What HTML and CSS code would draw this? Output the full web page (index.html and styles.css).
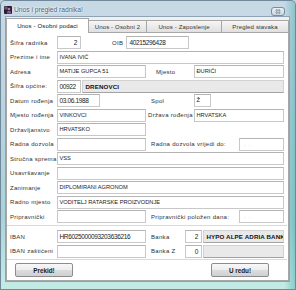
FILE: index.html
```html
<!DOCTYPE html>
<html lang="hr">
<head>
    <meta charset="UTF-8">
    <meta name="viewport" content="width=device-width, initial-scale=1.0">
    <title>Unos i pregled radnika!</title>
    <link rel="stylesheet" href="styles.css">
</head>
<body>
    <div class="window">
        <div class="titlebar">
            <svg class="app-icon" viewBox="0 0 8 8">
                <rect x="0" y="0" width="8" height="8" rx="1" fill="#2b1e31"/>
                <rect x="0.5" y="0.5" width="3" height="3" fill="#6b5a78"/>
                <circle cx="5" cy="3" r="1.3" fill="#b07ab8"/>
                <path d="M2.8 7.5 L3.4 5.2 Q5 4.4 6.6 5.2 L7.2 7.5 Z" fill="#8c5a96"/>
            </svg>
            <span class="title">Unos i pregled radnika!</span>
            <div class="close-btn">
                <svg viewBox="0 0 14 9">
                    <path d="M4.5 2 L9.5 7 M9.5 2 L4.5 7" stroke="#5d6d7c" stroke-width="2.4"/>
                    <path d="M4.5 2 L9.5 7 M9.5 2 L4.5 7" stroke="#ffffff" stroke-width="1.1"/>
                </svg>
            </div>
        </div>

        <div class="client">
            <div class="tabs">
                <div class="tab active tab-1">Unos - Osobni podaci</div>
                <div class="tab tab-2">Unos - Osobni 2</div>
                <div class="tab tab-3">Unos - Zaposlenje</div>
                <div class="tab tab-4">Pregled stavaka</div>
            </div>

            <div class="panel">
                <div class="row">
                    <span class="lbl">Šifra radnika</span>
                    <div class="box w-num num right">2</div>
                    <span class="lbl2 lbl-oib">OIB</span>
                    <div class="box w-oib num">40215296428</div>
                </div>

                <div class="row">
                    <span class="lbl">Prezime i ime</span>
                    <div class="box fill">IVANA IVIĆ</div>
                </div>

                <div class="row">
                    <span class="lbl">Adresa</span>
                    <div class="box w-mid">MATIJE GUPCA 51</div>
                    <span class="lbl2 lbl-mjesto">Mjesto</span>
                    <div class="box fill">ĐURIĆI</div>
                </div>

                <div class="row">
                    <span class="lbl">Šifra općine:</span>
                    <div class="box w-num num">00922</div>
                    <div class="gray-box">DRENOVCI</div>
                </div>

                <div class="row">
                    <span class="lbl">Datum rođenja</span>
                    <div class="box w-date num">03.06.1988</div>
                    <span class="lbl2 lbl-spol">Spol</span>
                    <div class="box w-small">Ž</div>
                </div>

                <div class="row">
                    <span class="lbl">Mjesto rođenja</span>
                    <div class="box w-mid">VINKOVCI</div>
                    <span class="lbl2 lbl-drzava">Država rođenja</span>
                    <div class="box fill">HRVATSKA</div>
                </div>

                <div class="row">
                    <span class="lbl">Državljanstvo</span>
                    <div class="box w-mid">HRVATSKO</div>
                </div>

                <div class="row">
                    <span class="lbl">Radna dozvola</span>
                    <div class="box w-mid"></div>
                    <span class="lbl2 lbl-long">Radna dozvola vrijedi do:</span>
                    <div class="box fill date-empty">.&nbsp;&nbsp;.</div>
                </div>

                <div class="row">
                    <span class="lbl">Stručna sprema</span>
                    <div class="box fill">VSS</div>
                </div>

                <div class="row">
                    <span class="lbl">Usavršavanje</span>
                    <div class="box fill"></div>
                </div>

                <div class="row">
                    <span class="lbl">Zanimanje</span>
                    <div class="box fill">DIPLOMIRANI AGRONOM</div>
                </div>

                <div class="row">
                    <span class="lbl">Radno mjesto</span>
                    <div class="box fill">VODITELJ RATARSKE PROIZVODNJE</div>
                </div>

                <div class="row">
                    <span class="lbl">Pripravnički</span>
                    <div class="box w-mid"></div>
                    <span class="lbl2 lbl-long">Pripravnički položen dana:</span>
                    <div class="box fill date-empty">.&nbsp;&nbsp;.</div>
                </div>

                <div class="sep sep-top"></div>

                <div class="row">
                    <span class="lbl">IBAN</span>
                    <div class="box w-mid num">HR6025000093203636216</div>
                    <span class="lbl2 lbl-banka">Banka</span>
                    <div class="box w-small num right">2</div>
                    <div class="gray-box">HYPO ALPE ADRIA BANK</div>
                </div>

                <div class="row">
                    <span class="lbl">IBAN zaštićeni</span>
                    <div class="box w-mid"></div>
                    <span class="lbl2 lbl-banka">Banka Z</span>
                    <div class="box w-small num right">0</div>
                    <div class="gray-box"></div>
                </div>

                <div class="sep"></div>

                <div class="buttons">
                    <button class="btn">Prekid!</button>
                    <button class="btn">U redu!</button>
                </div>
            </div>
        </div>
    </div>
</body>
</html>
```

FILE: styles.css
```css
* {
    margin: 0;
    padding: 0;
    box-sizing: border-box;
}

html, body {
    width: 296px;
    height: 290px;
    overflow: hidden;
}

body {
    font-family: 'Liberation Sans', Arial, sans-serif;
    background: #b9d3df;
}

.window {
    width: 296px;
    height: 290px;
    display: flex;
    flex-direction: column;
    border-radius: 5px 5px 0 0;
    background:
        linear-gradient(to right, rgba(255,255,255,0) 0%, rgba(255,255,255,0) 96%, rgba(50,165,168,0.45) 100%),
        linear-gradient(to bottom, #c8d9e6 0%, #bad4e0 35%, #a9d3d9 75%, #c4ece6 100%);
    box-shadow: inset 0 0 0 1px #71889a;
}

/* Naslovna traka */
.titlebar {
    height: 16px;
    display: flex;
    align-items: center;
    padding: 3px 0 0 4px;
}

.app-icon {
    width: 8px;
    height: 8px;
    flex-shrink: 0;
}

.title {
    margin-left: 2px;
    font-size: 6.7px;
    color: #4f6175;
    text-shadow: 0 0 3px #fff, 0 0 2px #fff;
    white-space: nowrap;
}

.close-btn {
    margin-left: auto;
    margin-right: 11px;
    align-self: flex-end;
    width: 14px;
    height: 9px;
    border: 1px solid #7b8c9b;
    border-radius: 3px;
    background: linear-gradient(#eaf1f6, #c8d6e0);
    display: flex;
}

.close-btn svg {
    width: 100%;
    height: 100%;
}

/* Klijentsko područje */
.client {
    margin-left: 5px;
    width: 285px;
    height: 266px;
    border: 1px solid #8ea3b3;
    background: #f0f0f0;
}

.tabs {
    height: 15px;
    display: flex;
    align-items: flex-end;
}

.tab {
    height: 12px;
    margin-left: -1px;
    border: 1px solid #a7a7a7;
    border-bottom: none;
    background: linear-gradient(#f6f6f6, #e0e0e0);
    font-size: 6px;
    letter-spacing: 0.15px;
    color: #333;
    display: flex;
    align-items: center;
    justify-content: center;
    white-space: nowrap;
}

.tab.active {
    height: 15px;
    margin-bottom: -1px;
    margin-left: 0;
    background: #fff;
    color: #111;
    position: relative;
    z-index: 1;
    padding-bottom: 1px;
}

.tab-1 { width: 83px; }
.tab-2 { width: 59px; }
.tab-3 { width: 76px; }
.tab-4 { width: 68px; }

.panel {
    height: 249px;
    background: #fff;
    border: 1px solid #a7a7a7;
    padding: 3px 4px 0 3px;
    display: flex;
    flex-direction: column;
    gap: 1.5px;
}

/* Redovi obrasca */
.row {
    height: 13px;
    display: flex;
    align-items: center;
    flex-shrink: 0;
}

.lbl,
.lbl2 {
    font-size: 6px;
    letter-spacing: 0.3px;
    color: #303030;
    white-space: nowrap;
    flex-shrink: 0;
}

.lbl {
    width: 47px;
}

.lbl-oib { margin-left: 31px; width: 14px; }
.lbl-mjesto { margin-left: 10px; width: 38px; }
.lbl-spol { margin-left: 51px; width: 43px; }
.lbl-drzava { margin-left: 2px; width: 46px; }
.lbl-long { margin-left: 5px; width: 88px; }
.lbl-banka { margin-left: 5px; width: 34px; }

.box {
    height: 13px;
    border: 1px solid #c8c8c8;
    border-top-color: #b4b4b4;
    background: #fff;
    font-size: 5.7px;
    line-height: 11px;
    color: #1a1a1a;
    padding: 0 1.5px;
    white-space: nowrap;
    overflow: hidden;
    flex-shrink: 0;
}

.num {
    font-size: 6.5px;
    letter-spacing: -0.35px;
}

.right {
    text-align: right;
    padding-right: 3px;
}

.fill { flex: 1; }
.w-num { width: 24px; }
.w-oib { width: 63px; padding-left: 2.5px; }
.w-mid { width: 89px; }
.w-date { width: 43px; }
.w-small { width: 17px; }

.date-empty {
    color: #b5b5b5;
    padding-left: 4px;
}

.gray-box {
    flex: 1;
    height: 13px;
    margin-left: 1px;
    border: 1px solid #d2d2d2;
    border-bottom-color: #a2a2a2;
    background: #e9e9e9;
    font-size: 6.2px;
    font-weight: bold;
    letter-spacing: 0.12px;
    line-height: 11px;
    color: #111;
    padding-left: 2.5px;
    white-space: nowrap;
    overflow: hidden;
}

.sep {
    height: 1px;
    margin: 0 -3px;
    background: #dadada;
    flex-shrink: 0;
}

.sep-top {
    margin-bottom: 3px;
}

/* Gumbi */
.buttons {
    display: flex;
    justify-content: space-between;
    padding: 0 15px 0 5px;
    margin-top: 1.5px;
}

.btn {
    width: 58px;
    height: 14px;
    border: 1px solid #8c8c8c;
    border-radius: 2px;
    background: linear-gradient(#f8f8f8 0%, #ededed 48%, #dddddd 52%, #d0d0d0 100%);
    font-family: 'Liberation Sans', Arial, sans-serif;
    font-size: 6.3px;
    font-weight: bold;
    color: #1a1a1a;
}
```
